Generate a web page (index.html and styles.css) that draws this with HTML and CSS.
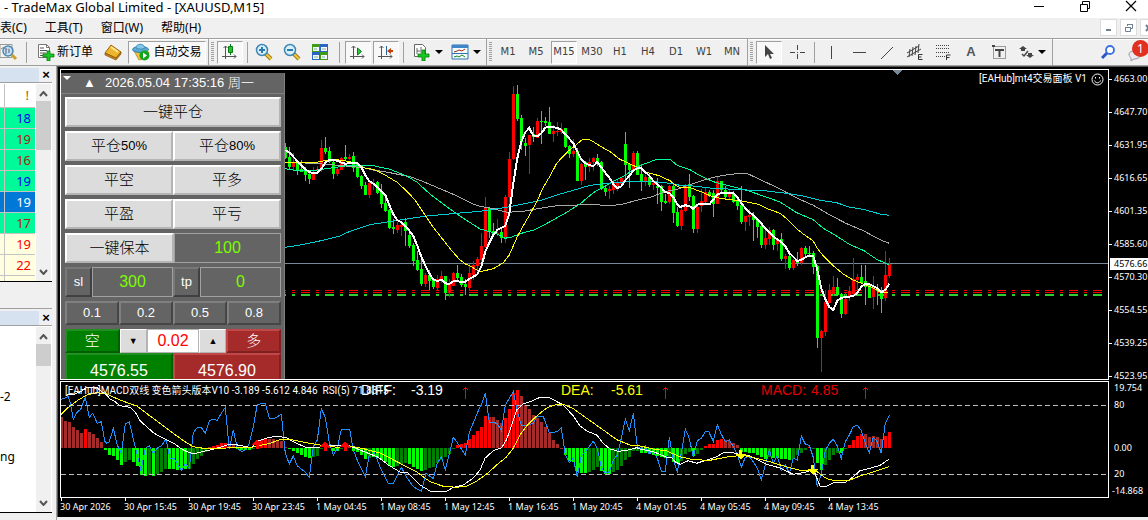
FILE: index.html
```html
<!DOCTYPE html>
<html lang="zh-CN">
<head>
<meta charset="utf-8">
<title>TradeMax Global Limited - [XAUUSD,M15]</title>
<link rel="stylesheet" href="styles.css">
</head>
<body>
<header class="titlebar">
  <span class="title">- TradeMax Global Limited - [XAUUSD,M15]</span>
  <div class="winctl">
    <button aria-label="最小化"><svg width="12" height="12"><path d="M1 6.500h10" stroke="#000"/></svg></button>
    <button aria-label="还原"><svg width="12" height="12" fill="none" stroke="#000"><path d="M1.500 4.500h7v7h-7zM3.500 4.500v-3h7v7h-2"/></svg></button>
    <button aria-label="关闭"><svg width="12" height="12"><path d="M1 1l10 10M11 1L1 11" stroke="#000" stroke-width="1.200"/></svg></button>
  </div>
</header>
<nav class="menubar">
  <a href="#">表(C)</a><a href="#">工具(T)</a><a href="#">窗口(W)</a><a href="#">帮助(H)</a>
  <div class="mdi">
    <button aria-label="最小化图表"><svg width="10" height="10"><path d="M2 7h5" stroke="#708090" stroke-width="2"/></svg></button>
    <button aria-label="还原图表"><svg width="10" height="10" fill="none" stroke="#708090"><path d="M1.500 4.500h5v4h-5zM1 4.500h6M3.500 3v-1.500h5v4H7M3 1.500h6"/></svg></button>
    <button aria-label="关闭图表"><svg width="10" height="10"><path d="M2 2l5 6M7 2L2 8" stroke="#708090" stroke-width="2"/></svg></button>
  </div>
</nav>
<div class="toolbar">
  <button class="tool first" aria-label="搜索报价"><svg width="18" height="18"><path d="M0 1.500h12v13H0z" fill="#f4f4ee" stroke="#999"/><path d="M1 6l3-2 3 3 3-3" stroke="#888" fill="none"/><circle cx="8" cy="8" r="5" fill="#b9dcf2" fill-opacity=".8" stroke="#4d88ad" stroke-width="1.500"/><path d="M6 5v6M9 6v4" stroke="#557"/><path d="M12 12l4 4" stroke="#c9a02c" stroke-width="3"/></svg></button>
  <span class="sep far"></span>
  <button class="tool order"><svg width="18" height="18"><path d="M1.500 1.500h8l3 3v10h-11z" fill="#fff" stroke="#777"/><path d="M9.500 1.500v3h3" fill="none" stroke="#777"/><path d="M3 5h4M3 7.500h7M3 10h6M3 12.500h3" stroke="#555"/><path d="M10 8h3v3h4v3h-4v4h-3v-4H6v-3h4z" fill="#19c822" stroke="#087a0e" stroke-width=".8"/></svg>新订单</button>
  <button class="tool book" aria-label="工具书"><svg width="18" height="18"><path d="M7 2l10 7-5 6L1 10z" fill="#edb52e" stroke="#9b6510"/><path d="M1 10l0 2 11 5 5-6V9l-5 6z" fill="#c18018" stroke="#8b560b" stroke-width=".7"/><path d="M7 4l7 5" stroke="#ffe58b" stroke-width="2"/></svg></button>
  <button class="tool auto on" aria-pressed="true"><svg width="18" height="18"><path d="M2 8l5 9 8-2 2-6z" fill="#ebc43d" stroke="#aa7c17" stroke-width=".7"/><ellipse cx="8.500" cy="6.500" rx="8" ry="3" fill="#5aaad5" stroke="#2d7ca8"/><path d="M4 5c0-5 8-5 9 0-2 1.500-7 1.500-9 0z" fill="#83c6e8" stroke="#3d8eb8"/><circle cx="12.500" cy="12.500" r="5" fill="#14a51d"/><path d="M11 9.500v6l4-3z" fill="#fff"/></svg>自动交易</button>
  <span class="end"></span><span class="grip"></span>
  <button class="tool on" aria-label="蜡烛图"><svg width="16" height="16"><path d="M3.500 2v13M0 12.500h14M1.500 4l2-2 2 2M12 10.500l2 2-2 2" fill="none" stroke="#555"/><path d="M8.500 0v11" stroke="#0a7a15"/><path d="M6.500 2.500h4v6h-4z" fill="#22c52b" stroke="#0a7a15"/></svg></button>
  <span class="sep"></span>
  <div class="group">
    <button class="tool" aria-label="放大"><svg width="18" height="18"><path d="M10.500 10.500l5.500 5.500" stroke="#a57b13" stroke-width="4"/><path d="M11 11l5 5" stroke="#ecc940" stroke-width="2"/><circle cx="7" cy="7" r="5.500" fill="#d9effa" stroke="#3f87b5" stroke-width="1.500"/><path d="M4 7h6M7 4v6" stroke="#287bad" stroke-width="2"/></svg></button>
    <button class="tool" aria-label="缩小"><svg width="18" height="18"><path d="M10.500 10.500l5.500 5.500" stroke="#a57b13" stroke-width="4"/><path d="M11 11l5 5" stroke="#ecc940" stroke-width="2"/><circle cx="7" cy="7" r="5.500" fill="#d9effa" stroke="#3f87b5" stroke-width="1.500"/><path d="M4 7h6" stroke="#287bad" stroke-width="2"/></svg></button>
    <button class="tool" aria-label="平铺窗口"><svg width="16" height="16"><path d="M0 0h8v8H0zM8 8h8v8H8z" fill="#3f9c17"/><path d="M8 0h8v8H8zM0 8h8v8H0z" fill="#2766c4"/><path d="M1 3h6v4H1zM9 3h6v4H9zM1 11h6v4H1zM9 11h6v4H9z" fill="#f5fbff"/><path d="M2 5h3M10 5h4M2 13h4M10 13h3" stroke="#8a9"/></svg></button>
  </div>
  <span class="sep mid"></span>
  <div class="group">
    <button class="tool on" aria-label="自动滚动"><svg width="16" height="16"><path d="M3.500 2v13M0 12.500h14M1.500 4l2-2 2 2M12 10.500l2 2-2 2" fill="none" stroke="#555"/><path d="M7.500 4v7l4-3.500z" fill="#2fc848" stroke="#087b1a"/></svg></button>
    <button class="tool on" aria-label="图表平移"><svg width="16" height="16"><path d="M3.500 2v13M0 12.500h14M1.500 4l2-2 2 2M12 10.500l2 2-2 2" fill="none" stroke="#555"/><path d="M8.500 2v9" stroke="#27659e"/><path d="M9 7l4-3v2h2v2h-2v2z" fill="#c43f0e"/></svg></button>
  </div>
  <span class="sep far"></span>
  <div class="group">
    <button class="tool drop" aria-label="指标"><svg width="18" height="18"><path d="M1.500 1.500h8l3 3v9h-11z" fill="#fff" stroke="#666"/><path d="M4 5v6M4 8h3M8 4v6" stroke="#666"/><path d="M9 7h3v4h4v3h-4v4H9v-4H5v-3h4z" fill="#19c822" stroke="#087a0e" stroke-width=".8"/></svg><i class="caret"></i></button>
    <button class="tool drop" aria-label="模板"><svg width="18" height="16"><path d="M1 1h16v14H1z" fill="#f6fbff" stroke="#2f72b0"/><path d="M1 1h16v3H1z" fill="#3f86c9"/><path d="M1 9.500h16" stroke="#2f72b0"/><path d="M3 8l3-1 2-1 3 1 3-2" stroke="#9c2f14" fill="none"/><path d="M3 13l3-1 2 1 3-2 3 2" stroke="#158a20" fill="none"/></svg><i class="caret"></i></button>
  </div>
  <span class="end"></span><span class="grip"></span>
  <div class="group periods">
    <button class="tool">M1</button><button class="tool">M5</button><button class="tool on" aria-pressed="true">M15</button><button class="tool">M30</button><button class="tool">H1</button><button class="tool">H4</button><button class="tool">D1</button><button class="tool">W1</button><button class="tool">MN</button>
  </div>
  <span class="end"></span><span class="grip"></span>
  <div class="group">
    <button class="tool on" aria-label="光标"><svg width="16" height="16"><path d="M4 1v12l3-3 2 5 2-1-2-4h4z" fill="#444"/></svg></button>
    <button class="tool" aria-label="十字准线"><svg width="16" height="16"><path d="M8.500 1v5M8.500 10v5M1 8.500h5M11 8.500h5M8 8.500h1" stroke="#444"/></svg></button>
  </div>
  <span class="sep"></span>
  <div class="group">
    <button class="tool" aria-label="垂直线"><svg width="16" height="16"><path d="M8.500 2v13" stroke="#444"/></svg></button>
    <button class="tool" aria-label="水平线"><svg width="16" height="16"><path d="M2 8.500h13" stroke="#444"/></svg></button>
    <button class="tool" aria-label="趋势线"><svg width="16" height="16"><path d="M2 15L14 3" stroke="#444"/></svg></button>
    <button class="tool" aria-label="等距通道"><svg width="18" height="18"><path d="M1 10L13 3M1 14L15 6M4 6l-1 8M7 4l-1 9M10 3l-1 9M13 1l-1 9" stroke="#444" fill="none"/><path d="M16.500 11.500h-4v5h4M12.500 14h3" stroke="#333" fill="none"/></svg></button>
    <button class="tool" aria-label="斐波那契"><svg width="18" height="18"><path d="M2 2.500h14M2 5.500h14M2 9.500h14M2 13.500h9" stroke="#444" stroke-dasharray="1 1"/><path d="M12.500 17v-5h4M12.500 14.500h3" stroke="#333" fill="none"/></svg></button>
    <button class="tool letter">A</button>
    <button class="tool" aria-label="文本标签"><svg width="16" height="16"><path d="M2.500 2.500h12v12h-12z" fill="none" stroke="#444" stroke-dasharray="1 1"/><path d="M1 1h3v2H1z" fill="#444"/><path d="M4 6h9M8.500 5v8" stroke="#444" stroke-width="2"/></svg></button>
    <button class="tool drop" aria-label="图形"><svg width="16" height="16"><path d="M5 2l4 3-2 0 0 2-4 0 0-2-2 0zM12 14l-4-3 2 0 0-2 4 0 0 2 2 0z" fill="#444"/><path d="M4 10l2 2 4-5" stroke="#444" stroke-width="1.500" fill="none"/></svg><i class="caret"></i></button>
  </div>
  <span class="end"></span>
  <div class="right">
    <button class="tool" aria-label="搜索"><svg width="16" height="16"><path d="M6 9l-5 5" stroke="#2458c9" stroke-width="3"/><circle cx="9" cy="6" r="4" fill="#fff" stroke="#3a6fe0" stroke-width="1.800"/></svg></button>
    <button class="chat" aria-label="消息"><svg width="20" height="20"><path d="M2 12c0-4 12-5 12 0 0 4-5 5-7 5l-3 2v-3c-1-1-2-2-2-4z" fill="#e9e9ef" stroke="#9a9aa5"/></svg><b>1</b></button>
  </div>
</div>
<main class="workspace">
  <aside class="side">
    <section class="pane watch">
      <div class="pane-head"><span></span><button aria-label="关闭市场报价">×</button></div>
      <div class="pane-body">
        <table>
          <thead><tr><th></th><th>!</th></tr></thead>
          <tbody>
            <tr class="up"><td></td><td class="blue">18</td></tr>
            <tr class="up"><td></td><td class="brick">19</td></tr>
            <tr class="up"><td></td><td class="brick">16</td></tr>
            <tr class="up"><td></td><td class="blue">19</td></tr>
            <tr class="sel"><td></td><td>19</td></tr>
            <tr class="up"><td></td><td class="brick">17</td></tr>
            <tr class="calm"><td></td><td>19</td></tr>
            <tr class="calm"><td></td><td>22</td></tr>
            <tr class="calm"><td></td><td></td></tr>
          </tbody>
        </table>
        <div class="scroll"><svg width="9" height="6"><path d="M1 5l3.500-4 3.500 4" fill="none" stroke="#555" stroke-width="2"/></svg><i class="long"></i><svg width="9" height="6"><path d="M1 1l3.500 4L8 1" fill="none" stroke="#555" stroke-width="2"/></svg></div>
      </div>
    </section>
    <section class="pane navi">
      <div class="pane-head"><span></span><button aria-label="关闭导航">×</button></div>
      <div class="pane-body">
        <div class="tree"><span>-2</span><span>ng</span></div>
        <div class="scroll"><svg width="9" height="6"><path d="M1 5l3.500-4 3.500 4" fill="none" stroke="#555" stroke-width="2"/></svg><i></i><svg width="9" height="6"><path d="M1 1l3.500 4L8 1" fill="none" stroke="#555" stroke-width="2"/></svg></div>
      </div>
    </section>
  </aside>
  <section class="charts">
    <div class="plot price">
      <svg id="price" width="100%" height="100%"></svg>
      <div class="ea-name">[EAHub]mt4交易面板 V1 <svg width="13" height="13" fill="none" stroke="#fff"><circle cx="6.500" cy="6.500" r="5.500"/><path d="M3.500 7.500c1 3 5 3 6 0M4.500 4v1.500M8.500 4v1.500"/></svg></div>
      <form class="panel">
        <div class="panel-head"><i></i><span>▲</span><time>2026.05.04 17:35:16 周一</time></div>
        <div class="rows">
          <div class="row"><button type="button" class="key">一键平仓</button></div>
          <div class="row"><button type="button" class="key">平仓<small>50%</small></button><button type="button" class="key">平仓<small>80%</small></button></div>
          <div class="row"><button type="button" class="key">平空</button><button type="button" class="key">平多</button></div>
          <div class="row"><button type="button" class="key">平盈</button><button type="button" class="key">平亏</button></div>
          <div class="row"><button type="button" class="key">一键保本</button><input value="100" aria-label="保本点数"></div>
          <div class="row stops"><label for="sl">sl</label><input id="sl" value="300"><label for="tp">tp</label><input id="tp" value="0"></div>
          <div class="row low"><button type="button" class="dark">0.1</button><button type="button" class="dark">0.2</button><button type="button" class="dark">0.5</button><button type="button" class="dark">0.8</button></div>
          <div class="row low lots"><button type="button" class="sell">空</button><button type="button" class="step">▼</button><input class="lot" value="0.02" aria-label="手数"><button type="button" class="step">▲</button><button type="button" class="buy">多</button></div>
          <div class="row quotes"><button type="button" class="sell">4576.55</button><button type="button" class="buy">4576.90</button></div>
        </div>
      </form>
    </div>
    <div class="axis">
      <span>4663.00</span><span>4647.70</span><span>4631.95</span><span>4616.65</span><span>4601.35</span><span>4585.60</span><span>4570.30</span><span>4554.55</span><span>4539.25</span><span>4523.95</span>
      <b class="last">4576.66</b>
    </div>
    <div class="plot macd"><svg id="macd" width="100%" height="100%"></svg></div>
    <svg id="scale" width="100%" height="100%"></svg>
    <div class="times">
      <span>30 Apr 2026</span><span>30 Apr 15:45</span><span>30 Apr 19:45</span><span>30 Apr 23:45</span><span>1 May 04:45</span><span>1 May 08:45</span><span>1 May 12:45</span><span>1 May 16:45</span><span>1 May 20:45</span><span>4 May 01:45</span><span>4 May 05:45</span><span>4 May 09:45</span><span>4 May 13:45</span>
    </div>
  </section>
</main>
<script src="chart.js"></script>
</body>
</html>
```
FILE: styles.css
```css
* { box-sizing: border-box; }
body {
  margin: 0;
  height: 100vh;
  display: flex;
  flex-direction: column;
  overflow: hidden;
  background: #f0f0f0;
  color: #000;
  font: 12px/16px "Noto Sans", "Noto Sans CJK SC", sans-serif;
}
button, input { font: inherit; color: inherit; margin: 0; padding: 0; border: 0; background: none; border-radius: 0; }
button { display: flex; align-items: center; justify-content: center; white-space: nowrap; }
svg { display: block; flex: none; }

.titlebar { height: 18px; background: #fff; display: flex; justify-content: space-between; padding-left: 4px; }
.title { font-size: 13px; line-height: 14px; white-space: nowrap; }
.winctl { display: flex; height: 12px; gap: 34px; padding-right: 11px; }

.menubar { height: 20px; display: flex; gap: 18px; line-height: 20px; padding-left: 0; }
.menubar a { color: #000; text-decoration: none; white-space: nowrap; }
.mdi { margin-left: auto; display: flex; gap: 3px; padding-top: 1px; margin-right: -9px; }
.mdi button { width: 17px; height: 17px; background: #fff; border: 1px solid #ddd; }

.toolbar { height: 28px; display: flex; align-items: center; border-top: 1px solid #a0a0a0; border-bottom: 1px solid #a0a0a0; box-shadow: inset 0 1px #fff; flex: none; }
.group { display: flex; gap: 2px; }
.tool { width: 26px; height: 23px; flex: none; }
.tool.on { border: 1px solid #a0a0a0; border-right-color: #fff; border-bottom-color: #fff; background: #f8f8f8; }
.tool.first { width: 22px; justify-content: flex-start; }
.tool.order { width: 64px; gap: 2px; }
.tool.book { margin-left: 3px; }
.tool.auto { width: 78px; gap: 3px; margin-left: 2px; }
.tool.drop { width: 36px; gap: 4px; }
.caret { border: 4px solid transparent; border-top-color: #000; border-bottom: 0; width: 7px; }
.sep, .end { width: 1px; height: 21px; background: #a0a0a0; margin: 0 3px 0 4px; flex: none; }
.sep.far { margin: 0 6px 0 4px; }
.sep.mid { margin: 0 5px 0 6px; }
.end { height: 26px; margin: 0 0 0 2px; }
.grip { width: 3px; height: 20px; margin: 0 3px 0 2px; background: repeating-linear-gradient(#a0a0a0 0 1px, #f0f0f0 1px 2px); flex: none; }
.periods { font: 10px/12px "DejaVu Sans", sans-serif; color: #404040; }
.letter { font: bold 13px/16px "Liberation Sans", sans-serif; color: #555; }
.right { margin-left: auto; display: flex; gap: 4px; align-items: center; }
.chat { position: relative; width: 22px; height: 23px; overflow: visible; }
.chat b { position: absolute; left: 6px; top: -1px; width: 17px; height: 17px; border-radius: 50%; background: #e03020; color: #fff; font: 12px/17px "Noto Sans", sans-serif; text-align: center; }

.workspace { flex: 1; min-height: 0; display: flex; }
.side { width: 57px; flex: none; display: flex; flex-direction: column; padding-right: 4px; border-right: 1px solid #a0a0a0; }
.pane-head { height: 17px; display: flex; justify-content: space-between; border-bottom: 1px solid #a0a0a0; padding-right: 2px; padding-top: 2px; }
.pane-head span { width: 39px; background: #d6e2f0; }
.pane-head button { font: bold 13px/14px "Liberation Sans", sans-serif; width: 8px; }
.pane-body { display: flex; border-bottom: 1px solid #000; overflow: hidden; background: #fff; flex: 1; min-height: 0; padding-top: 1px; }
.watch { height: 216px; display: flex; flex-direction: column; }
.navi { flex: 1; display: flex; flex-direction: column; margin: 26px 0 7px; border-top: 1px solid #a0a0a0; min-height: 0; }
table { width: 35px; border-collapse: collapse; table-layout: fixed; height: 212px; }
th, td { padding: 0 4px 0 0; height: 21px; text-align: right; font: 13px/20px "Noto Sans", sans-serif; border-bottom: 1px solid #c4c4c4; }
th { height: 23px; color: #a06000; padding-right: 6px; }
th:first-child, td:first-child { width: 4px; padding: 0; border-right: 1px solid #c4c4c4; }
.up { background: #00fa9a; }
.sel { background: #0078d7; color: #fff; }
.calm { background: #ffffe0; color: #f00; }
.blue { color: #0000f0; }
.brick { color: #b02010; }
.scroll { width: 15px; margin-left: auto; margin-right: 1px; background: #f0f0f0; display: flex; flex-direction: column; align-items: center; padding: 7px 0 6px; }
.scroll i { width: 15px; height: 22px; margin: 4px 0 auto; background: #cdcdcd; }
.scroll .long { height: 49px; }
.tree { display: flex; flex-direction: column; gap: 44px; padding-top: 62px; }

.charts {
  flex: 1;
  min-width: 0;
  display: grid;
  grid-template: minmax(0, 311fr) minmax(0, 118fr) 19px / minmax(0, 1fr) 39px;
  padding: 3px 0 0 3px;
  border-bottom: 3px solid #f0f0f0;
  background: #000;
  box-shadow: inset 1px 1px #555;
  color: #fff;
  font: 9px/12px "Noto Sans", "Noto Sans CJK SC", sans-serif;
}
.plot { position: relative; border: 1px solid #fff; overflow: hidden; min-height: 0; }
.macd { margin-top: 1px; }
#scale { margin-top: 1px; }
.axis { position: relative; display: flex; flex-direction: column; gap: 21px; padding-top: 4px; min-height: 0; }
.axis span { display: flex; align-items: center; gap: 2px; }
.axis span::before { content: ""; width: 3px; height: 1px; background: #fff; }
.last { position: absolute; top: 189px; left: 1px; right: 0; padding-left: 4px; background: #fff; color: #000; font-weight: normal; }
.times { grid-column: 1 / -1; display: flex; overflow: hidden; }
.times span { width: 64px; flex: none; white-space: nowrap; padding-top: 3px; background: linear-gradient(#fff, #fff) 1px 0 / 1px 3px no-repeat; }
.ea-name { position: absolute; top: 2px; right: 4px; display: flex; gap: 4px; align-items: center; font: 10px/14px Roboto, "Noto Sans CJK SC", sans-serif; }
#macd text { fill: #fff; font: 14px "Liberation Sans", sans-serif; }
#macd .name { font: 10px Roboto, "Noto Sans CJK SC", sans-serif; white-space: pre; }
#macd .dea { fill: #ff0; }
#macd .bar { fill: #e00000; }
#scale text { fill: #fff; font: 9px "Noto Sans", sans-serif; }

.panel { position: absolute; left: 0; top: 3px; bottom: 0; width: 224px; overflow: hidden; background: #646464; border-right: 1px solid #808080; font: 300 15px/18px "Liberation Sans", "Noto Sans CJK SC", sans-serif; }
.panel-head { height: 21px; border-bottom: 1px solid #808080; display: flex; align-items: center; font-size: 13px; }
.panel-head i { border: 4px solid transparent; border-top-color: #fff; border-bottom: 0; margin: 0 12px 10px 2px; }
.panel-head span { width: 22px; }
.panel-head time { white-space: nowrap; }
.rows { padding: 3px 3px 0 4px; display: flex; flex-direction: column; gap: 4px; color: #000; }
.row { display: flex; height: 30px; flex: none; }
.row > * { flex: 1 1 0; min-width: 0; border: 2px solid; }
.low { height: 24px; }
.key, .step { background: #dcdcdc; border-color: #fff #b4b4b4 #b4b4b4 #fff; }
.key small { font-size: 13px; }
.row input { text-align: center; border: 1px solid #a0a0a0; background: #646464; color: #7cfc00; font-size: 16px; }
.row.stops label { flex: 0 0 27px; text-align: center; line-height: 26px; font-size: 13px; color: #fff; border-color: #787878 #404040 #404040 #787878; }
.dark { color: #fff; font-size: 13px; border-color: #808080 #464646 #464646 #808080; }
.row .step { flex: 0 0 27px; border-width: 1px; font-size: 9px; }
.row .lot { background: #fff; color: #f00; border-color: #b4b4b4; }
.sell { color: #fff; background: #008000; border-color: #209020 #006000 #006000 #209020; }
.buy { color: #fff; background: #a52a2a; border-color: #c04848 #802020 #802020 #c04848; }
.row.quotes { height: 36px; margin-top: -4px; font-size: 16px; }
```
FILE: chart.js
```javascript
const NS = 'http://www.w3.org/2000/svg';
const PITCH = 4;
const FIRST_X = 61;

function add(parent, tag, attrs, text) {
  const el = document.createElementNS(NS, tag);
  for (const name in attrs) el.setAttribute(name, attrs[name]);
  if (text) el.textContent = text;
  parent.appendChild(el);
  return el;
}

// A series is a list of segments: [origin x, origin y, points in thirds of a pixel].
function points(segments) {
  return segments.map(([ox, oy, list]) => list.split(' ').map(p => {
    const [x, y] = p.split(',').map(Number);
    return (ox + x / 3).toFixed(1) + ',' + (oy + y / 3).toFixed(1);
  }).join(' ')).join(' ');
}

function line(parent, color, width, segments) {
  add(parent, 'polyline', { points: points(segments), fill: 'none', stroke: color, 'stroke-width': width });
}

function rule(parent, y, color, dash, height) {
  add(parent, 'line', { x1: 61, x2: '200%', y1: y, y2: y, stroke: color, 'stroke-width': height || 1, 'stroke-dasharray': dash || 'none' });
}

// Candles: colour, high, body top, body bottom, low.
const candles = [
  [80, `G190,202,234,236 G202,232,262,268 R218,248,262,272 G245,250,270,284 G240,268,276,276 G262,272,286,302 G270,282,297,312 R262,275,300,300 R258,268,272,275 R180,204,268,276 G171,204,216,222 G202,213,246,250 G238,246,283,297 R262,267,283,288 R232,235,270,270 G195,231,237,240 R222,231,237,240 G216,228,264,275 G248,252,291,294 G284,288,318,327 G306,315,345,345 R306,309,345,353 R297,309,312,330 G303,306,338,342 G312,336,372,384 G352,369,393,396 G387,390,444,447 G417,441,447,462 R426,435,450,459 R432,435,440,468 G414,426,453,498 G450,465,498,504 G489,495,543,558 G513,540,570,573 G534,567,612,618 R579,585,612,621 G570,585,603,630 G594,600,621,627 R585,597,624,630 R573,588,603,608 G588,588,639,660 R597,612,639,651 R576,579,618,618 G555,579,594,606 G582,591,615,621 G597,612,621,645 R552,579,624,630 R543,555,585,600 R531,537,558,576 R459,498,540,546 R351,384,501,504 G381,384,456,474 G429,453,462,468 R417,459,462,468
  G444,456,474,489 R345,351,474,489 R216,237,351,411 R18,42,237,240 G15,42,117,123 G105,114,186,210 G174,189,198,228 R165,165,195,282 G141,162,171,186 R114,123,174,174 G93,123,126,192 G111,123,129,138 G81,126,162,162 R135,153,162,186 R126,153,156,168 R129,147,156,162 G144,144,201,204 G195,198,222,234 R177,213,222,231 G204,213,303,303 R249,252,303,315 G243,246,261,300 R234,246,261,276 R231,234,246,273 G222,234,252,258 G243,246,327,330 G318,324,336,348 R318,327,333,357 R300,309,330,342 R300,309,318,333 R291,294,312,318 G156,192,255,297 G249,252,270,324 R213,219,270,276 G213,219,285,285 G252,282,303,333 R285,291,303,318 G282,291,315,321 R303,309,315,330 G294,318,324,372 G315,318,366,393 G342,363,369,372 R315,318,366,372 G309,318,399,429 G381,396,438,441 R381,390,438,450 R312,318,393,396 G282,312,351,363 G345,348,447,459 R375,380,447,459`],
  [150, `R117,153,168,186 R111,126,156,159 G120,126,135,141 G120,129,162,201 R81,93,162,162 G93,93,120,132 G108,120,141,147 R120,132,141,147 G123,132,156,159 G147,150,168,180 G108,165,216,222 R198,198,216,243 R177,195,201,228 G186,198,210,273 G204,207,231,264 G225,228,285,294 R240,264,285,297 R231,240,267,285 G237,240,285,300 R264,270,282,303 G249,267,327,333 R312,318,327,357 G309,318,354,360 R327,330,354,360 G306,333,339,348 R291,294,339,345 G288,294,312,318 G288,309,312,318 G303,309,351,372 G345,348,564,594 R540,543,564,666 R420,456,546,558 R402,420,459,459 R378,411,432,438 G384,411,435,438 G429,432,492,504 R429,447,492,495 R408,423,441,453 R324,387,432,438 R372,381,390,426 G345,381,399,402 G345,393,411,465 G402,405,444,444 R378,414,441,477 G402,414,423,465 G411,420,447,489 R303,375,444,453 R324,342,378,384`]
];

const price = add(document.getElementById('price'), 'g', { transform: 'translate(-61,-70)', 'shape-rendering': 'crispEdges' });
rule(price, 263.5, '#778899');
rule(price, 290.5, '#ff0000', '9 6 3 6');
rule(price, 292.5, '#ff0000', '9 6 3 6');
rule(price, 295, '#32cd32', '9 6 3 6', 2);

let index = 56;
for (const [oy, list] of candles) {
  for (const bar of list.split(/\s+/)) {
    const fill = bar[0] === 'R' ? '#ff0000' : '#00ff00';
    const [hi, top, bottom, lo] = bar.slice(1).split(',').map(v => Math.round(oy + v / 3));
    const x = FIRST_X + PITCH * index++;
    add(price, 'rect', { x: x, y: hi, width: 1, height: Math.max(1, lo - hi), fill: fill });
    add(price, 'rect', { x: x - 1, y: top, width: 3, height: Math.max(1, bottom - top), fill: fill });
  }
}

line(price, '#a9a9a9', 1, [
  [280, 80, '16,247 75,249 140,253 190,257 250,263 280,270 330,278 390,290 420,301 470,322 520,343 580,372'],
  [480, 80, '0,379 40,386 80,397 130,394 190,383 230,377 320,374 400,376 430,372 470,361 510,352 560,334 599,326'],
  [680, 150, '0,115 30,104 60,94 100,82 130,76 180,70 205,72 250,93 300,117 350,144 400,166 450,195 500,221 550,242 600,269 628,280']]);
line(price, '#00fa9a', 1, [
  [280, 80, '16,266 40,270 110,270 160,263 200,257 280,257 330,268 380,288 410,306 450,342 500,380 550,415 599,446'],
  [480, 80, '0,447 50,461 75,475 95,471 130,458 165,449 210,425 260,397 300,372 340,338 390,310 430,289 480,257 530,238 570,238 590,255'],
  [680, 150, '0,49 30,59 60,77 100,95 150,108 200,121 250,138 300,156 350,188 400,209 430,235 460,252 510,284 550,301 590,328 628,345']]);
line(price, '#00ced1', 1, [
  [280, 80, '16,502 60,495 110,485 180,468 210,454 270,434 340,423 440,408 540,399'],
  [480, 80, '0,394 80,382 130,372 180,362 230,345 280,331 330,316 400,308 460,304 520,305 570,310'],
  [680, 150, '0,106 40,108 90,114 160,118 260,123 320,130 370,138 420,151 470,158 510,172 550,178 600,192 628,196']]);
line(price, '#ffff00', 1, [
  [280, 80, '16,247 45,247 105,248 148,239 172,239 210,245 235,252 250,263 280,268 295,275 320,288 350,306 380,333 405,360 425,390 440,413 460,442 490,480 515,512 540,540 555,551 575,561'],
  [480, 80, '0,575 40,566 70,548 88,525 112,470 130,437 150,403 170,365 190,322 210,288 230,250 245,233 265,213 285,197 305,180 325,178 340,185 360,198 390,215 420,238 450,252 475,263 500,277 540,288 570,302 590,318'],
  [680, 150, '0,112 30,113 60,124 90,137 110,143 150,149 180,152 200,156 235,163 265,177 300,190 325,210 350,236 370,252 400,273 410,293 430,317 460,347 490,372 520,390 550,402 580,414 600,426 625,427']]);
line(price, '#ffffff', 2, [
  [280, 80, '16,210 28,218 40,230 52,243 64,256 76,268 88,276 100,279 112,279 124,266 136,248 148,240 160,240 172,242 184,248 196,251 208,250 220,249 232,249 244,262 256,285 268,303 280,311 292,322 304,333 316,345 328,375 340,403 352,420 364,427 376,438 388,452 400,468 412,497 424,530 436,557 448,580 460,599 472,603 484,599 496,610 508,612 520,604 532,603 544,606 556,605 568,597 580,590 592,583'],
  [480, 80, '4,560 16,515 28,488 40,465 52,450 64,443 76,438 88,400 100,310 112,235 124,185 136,157 148,144 160,167 172,169 184,160 196,143 208,141 220,141 232,144 244,149 256,163 268,176 280,190 292,215 304,238 316,250 328,255 340,259 352,246 364,262 376,278 388,293 400,312 412,324 424,319 436,301 448,288 460,271 472,265 484,265 496,276 508,287 520,303 532,313 544,323 556,337 568,338 580,352 592,374'],
  [680, 150, '0,171 16,166 28,168 40,177 52,164 64,161 90,161 100,149 112,133 124,129 160,129 172,141 184,160 196,174 208,187 220,196 232,208 244,220 256,236 268,248 280,260 292,268 304,276 316,289 328,309 340,320 352,333 364,329 376,322 388,317 400,319 412,360 424,415 436,447 448,471 460,480 472,452 484,444 496,441 508,440 520,438 532,428 544,410 556,402 568,403 580,408 592,415 604,427 616,419 628,402']]);
add(price, 'path', { d: 'M893 70h9l-4.500 5z', fill: '#778899' });

// Histogram: colour and end of each bar; the zero line is at 204.
const histogram = `B111 B123 B127 B142 B151 B160 R147 B156 B162 B174 B186 L210 L225 L228 L240 L255 G246 G240 L246 L258 L284 L288 G286 L288 G282 G276 G267 L267 L267 L270 L270 L267 G267 G252 G237 G228 G215 B202 R198 R196 R189 R189 B192 B196 L207 L209 L210 L210 G206 R186 R180 R175 B178 B178 B180 B182 B202 L208 L213 L220 L224 L232 L234 G232 G228 G208 R198 R200 L212 L212 G206 R196 B202
L212 L215 L225 L237 G234 L232 L232 L240 L246 L258 L261 G258 G252 G249 L253 L261 L268 L273 G269 G265 G261 G250 G240 G230 G222 G207 R195 R192 R189 R177 R165 R153 R141 R108 R110 B110 B120 B129 R114 R87 R39 R30 B48 B75 B87 B105 B114 B126 B142 B159 B180 B192 B206 L225 L243 L246 L275 L279 L279 G276 G270 G262 L273 L282 L281 G275 G269 G257 G240 G230 G213 G212
L218 L219 L220 L225 L228 L230 L235 G230 L245 L250 G242 G222 G216 L228 G222 G211 R198 R192 R193 R180 R177 B180 B182 B188 B195 L216 L216 L219 L219 L225 L231 L237 G232 L234 L234 L238 L238 L241 G237 G226 G219 G211 R201 G207 L249 L270 G255 G240 G225 G218 L219 G208 R195 R180 R168 R162 B162 B171 B168 B171 B177 R168 R156`;
const tint = { R: '#ff0000', B: '#a52a2a', L: '#00ff00', G: '#008000' };

const macdRoot = document.getElementById('macd');
const macd = add(macdRoot, 'g', { transform: 'translate(-61,-382)', 'shape-rendering': 'crispEdges' });
histogram.split(/\s+/).forEach((bar, i) => {
  const y = Math.round(380 + bar.slice(1) / 3);
  add(macd, 'rect', { x: 60 + PITCH * i, y: Math.min(y, 448), width: 3, height: Math.max(1, Math.abs(y - 448)), fill: tint[bar[0]] });
});
rule(macd, 405.5, '#c0c0c0', '5 3');
rule(macd, 474.5, '#c0c0c0', '5 3');

line(macd, '#1e90ff', 1, [
  [60, 380, '3,58 25,50 30,65 40,118 52,96 62,88 76,51 88,112 98,100 112,130 124,125 134,183 140,190 148,185 160,145 172,195 184,220 196,132 208,126 222,185 232,225 243,272 256,205 268,197 280,220 292,204 304,198 318,177 330,235 342,235 365,272 376,250 388,265 400,158 412,142 425,144 436,160 448,122 460,117 472,121 484,100 496,82 508,208 520,150 532,205 545,215 556,210 566,195 580,140 592,73 616,70 628,114 642,116 664,103 676,220 688,252 700,228 712,257 736,277 748,292 760,200 772,180 784,87 796,112 808,187 820,225 832,205 844,148 868,148'],
  [350, 380, '0,153 10,210 25,248 46,290 60,212 72,215 90,260 115,310 130,310 154,262 170,292 190,320 214,334 228,280 250,296 262,250 274,230 286,270 310,172 322,188 346,225 358,157 382,100 390,80 394,75 406,39 418,126 442,130 454,152 466,75 478,55 490,35 502,95 514,135 526,138 550,130 562,108 580,110 598,158 622,155 634,143 646,225 658,248 670,235 682,292 694,228 706,215 730,184 742,205 754,262 766,280 778,275 790,240 802,225 814,175 826,118 838,152 850,100 862,200'],
  [640, 380, '0,205 16,198 28,222 40,212 52,235 64,273 76,273 88,172 100,240 112,274 124,220 136,147 148,175 160,232 172,182 184,175 196,155 206,155 220,184 232,134 244,163 256,185 268,180 280,200 292,222 304,262 316,232 328,230 340,245 352,265 364,300 376,255 388,210 400,250 412,228 424,272 436,255 448,280 460,235 472,240 484,168 496,192 508,196 520,232 532,320 544,280 556,212 568,190 580,178 592,198 604,235 616,185 628,165 640,140 652,136 664,152 676,190 688,218 700,172 712,185 724,220 736,130 748,106']]);
line(macd, '#ffffff', 1, [
  [60, 380, '20,45 45,42 65,33 80,22 110,22 125,35 140,45 150,57 165,65 180,77 210,82 225,95 240,122 260,140 280,158 300,170 320,180 345,192 360,204 380,215 395,220 410,219 440,212 470,205 500,195 520,193 550,198 575,204 590,185 620,174 650,168 680,174 710,190 740,203 770,204 790,198 830,197'],
  [350, 380, '0,198 30,210 60,222 85,232 115,255 150,276 170,276 190,294 210,315 240,333 265,334 290,334 310,322 340,315 370,294 390,270 405,235 430,212 455,203 470,178 485,135 500,90 520,72 545,63 570,52 600,54 640,75 670,108 690,138 710,153 740,165 760,190 780,207 805,214 830,211 860,203'],
  [640, 380, '0,207 40,215 80,232 95,233 105,245 120,253 145,242 170,250 200,240 230,230 250,218 280,218 305,225 330,228 360,243 380,253 420,264 460,283 490,278 510,272 525,280 540,318 560,318 580,309 615,308 640,290 660,272 690,265 720,256 748,237']]);
line(macd, '#ffff00', 1, [
  [60, 380, '3,104 20,86 50,63 80,45 110,38 140,42 180,60 230,78 270,108 320,145 370,182 400,200 430,205 500,204 580,201 630,190 660,179 700,180 740,188 780,195 830,202'],
  [350, 380, '0,198 40,206 90,219 150,250 200,276 240,305 280,319 320,322 350,318 380,303 410,282 440,255 470,230 490,204 510,165 530,138 560,108 590,84 620,73 645,75 670,86 710,115 760,150 800,179 840,195'],
  [640, 380, '0,198 40,207 80,213 120,230 160,239 210,241 260,231 310,226 350,235 400,248 440,261 480,271 525,271 560,296 590,303 625,302 660,288 700,276 748,260']]);

for (const [x, y] of [[257, 439], [325, 441], [345, 441]]) {
  add(macd, 'path', { d: `M${x} ${y}l5 6h-3v4h-3v-4h-4z`, fill: '#ff0000' });
}
for (const [x, y] of [[741, 460], [813, 475]]) {
  add(macd, 'path', { d: `M${x} ${y}l-5 -6h3v-4h3v4h4z`, fill: '#ffff00' });
}

const labels = [
  [65, 394, 'name', '[EAHub]MACD双线 变色箭头版本V10 -3.189 -5.612 4.846  RSI(5) 71.8315'],
  [361, 395, '', 'DIFF:'], [411, 395, '', '-3.19'],
  [561, 395, 'dea', 'DEA:'], [611, 395, 'dea', '-5.61'],
  [761, 395, 'bar', 'MACD:'], [811, 395, 'bar', '4.85']
];
for (const [x, y, name, text] of labels) add(macd, 'text', { x: x, y: y, class: name }, text);
for (const x of [465, 665, 865]) {
  add(macd, 'path', { d: `M${x} 387h1v12h-1zM${x - 1} 388h3v1h-3zM${x - 2} 389h1v1h-1zM${x + 2} 389h1v1h-1z`, fill: '#ff0000' });
}

const scale = document.getElementById('scale');
for (const [y, text] of [[10, '19.754'], [27, '80'], [70, '0.00'], [96, '20'], [113, '-14.868']]) {
  add(scale, 'text', { x: text[0] === '-' ? 3 : 5, y: y }, text);
}
```
